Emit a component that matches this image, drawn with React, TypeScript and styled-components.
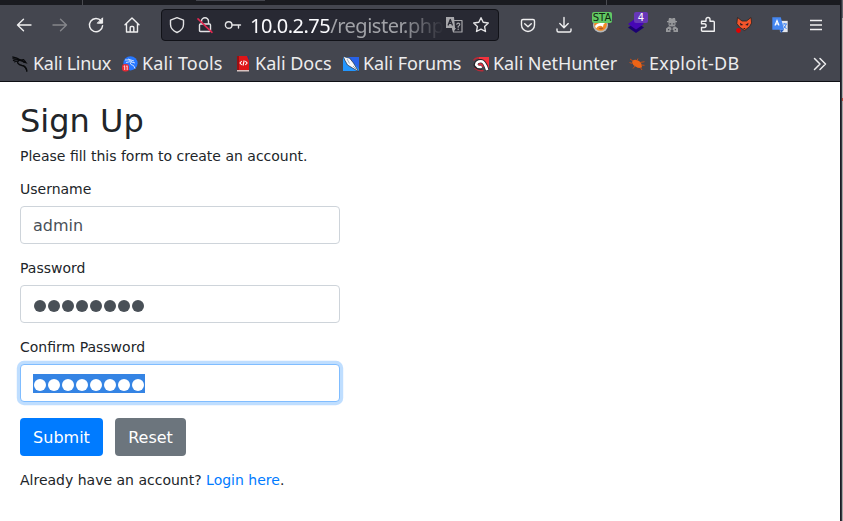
import React from "react";
import styled, { createGlobalStyle, css } from "styled-components";

const Global = createGlobalStyle`
  *, *::before, *::after { box-sizing: border-box; }
  html, body { margin: 0; padding: 0; background: #fff; overflow: hidden; }
`;

const Screen = styled.div`
  display: flex;
  width: 843px;
  height: 521px;
`;

const Browser = styled.div`
  display: flex;
  flex-direction: column;
  width: 840px;
  background: #fff;

  > * { flex-shrink: 0; }
`;

const Desktop = styled.div`
  width: 3px;
  background: linear-gradient(90deg, #1b1c24 0 1px, #343740 1px 2px, transparent 2px),
    linear-gradient(#65666d 0 18px, #aaa 18px 98px, #b84a3c 98px 101px, #a4a4a4 101px);
`;

const TabStrip = styled.div`
  display: flex;
  height: 5px;
  background: #1a1b20;
`;

const TabGap = styled.div<{ $w: number }>`
  width: ${(p) => p.$w}px;
  border-right: 1px solid #4a4b51;
`;

const ActiveTab = styled.div`
  width: 69px;
  height: 1px;
  margin-left: 113px;
  background: #44464e;
`;

const Toolbar = styled.div`
  display: flex;
  align-items: center;
  height: 44px;
  padding: 0 6px 4px;
  background: #44464f;
`;

const ToolButton = styled.div<{ $dim?: boolean }>`
  display: flex;
  flex: 0 0 36px;
  justify-content: center;
  align-items: center;
  height: 36px;
  color: ${(p) => (p.$dim ? "#85868b" : "#efeff0")};
`;

const AddressBar = styled.div`
  display: flex;
  align-items: center;
  flex: 0 0 338px;
  min-width: 0;
  height: 32px;
  margin: 0 11px;
  padding: 0 0 0 6px;
  border: 1px solid #111218;
  border-radius: 4px;
  background: #282933;
  color: #e3e3e5;
`;

const AddressSlot = styled.div<{ $w?: number }>`
  display: flex;
  flex: 0 0 ${(p) => p.$w ?? 28}px;
  justify-content: center;
`;

const Url = styled.div`
  flex: 1;
  min-width: 0;
  padding-top: 2px;
  overflow: hidden;
  white-space: nowrap;
  font: 20px/28px "Noto Sans", sans-serif;
  color: #a1a2a7;
  letter-spacing: -0.48px;
  mask-image: linear-gradient(90deg, #000 78%, transparent 100%);
`;

const Host = styled.span`
  color: #fbfbfe;
  letter-spacing: -0.5px;
`;

const Bookmarks = styled.div`
  display: flex;
  align-items: center;
  height: 33px;
  padding: 0 12px 3px;
  background: #44464f;
  border-bottom: 1px solid #0e0f14;
  color: #ececed;
`;

const Bookmark = styled.div<{ $w: number; $track?: number }>`
  display: flex;
  flex: 0 0 ${(p) => p.$w}px;
  align-items: center;
  gap: 4px;
  white-space: nowrap;
  font: 18px/26px "Noto Sans", sans-serif;
  letter-spacing: ${(p) => p.$track ?? 0}px;

  svg { flex: none; }
`;

const BookmarkName = styled.span`
  padding-bottom: 1px;
  line-height: 25px;
`;

const Overflow = styled.div`
  display: flex;
  margin-left: auto;
`;

const Page = styled.main`
  width: 360px;
  padding: 20px 20px 0;
  font-family: "DejaVu Sans", sans-serif;
  font-size: 14px;
  line-height: 17px;
  color: #212529;
`;

const Title = styled.h2`
  margin: 0 0 8px;
  font-size: 32px;
  font-weight: 400;
  line-height: 38px;
`;

const Paragraph = styled.p`
  margin: 0 0 16px;
`;

const Field = styled.div`
  margin-bottom: 16px;
`;

const Label = styled.label`
  display: block;
  margin-bottom: 8px;
`;

const Control = styled.div<{ $focus?: boolean }>`
  display: flex;
  align-items: center;
  height: 38px;
  padding: 1px 12px 0;
  border: 1px solid #ced4da;
  border-radius: 4px;
  background: #fff;
  font-size: 16px;
  line-height: 24px;
  color: #495057;
  ${(p) =>
    p.$focus &&
    css`
      border-color: #80bdff;
      box-shadow: 0 0 0 3.2px rgba(0, 123, 255, 0.25);
    `}
`;

const Mask = styled.div<{ $selected?: boolean }>`
  display: flex;
  align-items: center;
  gap: 1.6px;
  height: 19px;
  padding: 3px 0.8px 0;
  background: ${(p) => (p.$selected ? "#3584e4" : "transparent")};
  color: ${(p) => (p.$selected ? "#fff" : "#495057")};
`;

const Dot = styled.i`
  width: 12.4px;
  height: 12.4px;
  border-radius: 50%;
  background: currentColor;
`;

const Actions = styled.div`
  display: flex;
  gap: 12px;
  margin-bottom: 16px;
`;

const Button = styled.button<{ $bg: string; $w: number }>`
  width: ${(p) => p.$w}px;
  height: 38px;
  padding: 1px 0 0;
  border: 0;
  border-radius: 4px;
  background: ${(p) => p.$bg};
  color: #fff;
  font: 16px/24px "DejaVu Sans", sans-serif;
`;

const Link = styled.a`
  color: #007bff;
  text-decoration: none;
`;

const Icon = ({ size = 18, sw = 1.4, children }: { size?: number; sw?: number; children: React.ReactNode }) => (
  <svg width={size} height={size} viewBox={`0 0 ${size} ${size}`} fill="none" stroke="currentColor" strokeWidth={sw} strokeLinecap="round" strokeLinejoin="round">
    {children}
  </svg>
);

const Badged = styled.div`
  position: relative;
  display: flex;
`;

const Badge = styled.span<{ $bg: string; $fg: string; $w: number; $left: number }>`
  position: absolute;
  top: -4px;
  left: ${(p) => p.$left}px;
  width: ${(p) => p.$w}px;
  height: 11px;
  border-radius: 2px;
  background: ${(p) => p.$bg};
  color: ${(p) => p.$fg};
  font: 10px/11px "DejaVu Sans", sans-serif;
  text-align: center;
`;

const Back = () => <Icon><path d="M16 9H2.5M8.5 3.2L2.5 9l6 5.8" /></Icon>;
const Forward = () => <Icon><path d="M2 9h13.5M9.5 3.2l6 5.8-6 5.8" /></Icon>;
const Reload = () => <Icon><path d="M14.2 5A6.6 6.6 0 1 0 15.6 9.6" /><path d="M15.6 2.2v5h-5z" fill="currentColor" strokeWidth="1" /></Icon>;
const Home = () => <Icon><path d="M2 8.7L9 2l7 6.700M3.500 7.600V16h11V7.600M7.200 16v-4.500q0-1 1-1h1.600q1 0 1 1V16" /></Icon>;
const Shield = () => <Icon><path d="M9 1.700l6.500 2.500v4.300c0 3.700-2.800 6.400-6.500 8-3.700-1.600-6.500-4.300-6.500-8V4.200z" /></Icon>;
const Lock = () => (
  <Icon><path d="M5.500 7.500V5.300a3.500 3.500 0 0 1 7 0v2.200M4.500 8h9q1 0 1 1v5.500q0 1-1 1h-9q-1 0-1-1V9q0-1 1-1z" /><path d="M2 2.800l14 13.500" stroke="#e22850" strokeWidth="1.600" /></Icon>
);
const Key = () => <Icon><circle cx="4.700" cy="9" r="3.300" /><path d="M8 9h8.500M14.500 9v3" /></Icon>;
const Translate = () => (
  <Icon>
    <path d="M1 1h8l1 11H1z" fill="#a7a7ab" stroke="none" />
    <path d="M9.500 4.500H17V16H8.500L7.500 12" stroke="#a7a7ab" strokeWidth="1.200" />
    <path d="M7 12h4l-2.500 4z" fill="#a7a7ab" stroke="none" />
    <path d="M3.200 9L5.300 3.500 7.300 9M4 7.300h2.700" stroke="#282933" strokeWidth="1.300" />
    <path d="M11.800 8.200q1.500-2 3 0 0 1.500-1.600 2v1M13.200 13v.4" stroke="#a7a7ab" strokeWidth="1.200" />
  </Icon>
);
const Star = () => <Icon><path d="M9 1.700l2.200 4.600 5.100.7-3.700 3.500.9 5-4.500-2.400-4.500 2.400.9-5L1.700 7l5.100-.7z" /></Icon>;
const Pocket = () => <Icon><path d="M4 3.500h10q1.500 0 1.500 1.500V9a6.500 6.500 0 0 1-13 0V5q0-1.500 1.500-1.500zM5.700 7.700L9 10.800l3.300-3.100" /></Icon>;
const Download = () => <Icon><path d="M9 1.500v10M4.800 7.600L9 11.800l4.200-4.200M2 13v1.500q0 1.500 1.500 1.500h11q1.500 0 1.500-1.500V13" /></Icon>;
const Proxy = () => (
  <Badged>
    <svg width="18" height="18" viewBox="0 0 18 18">
      <circle cx="9.500" cy="9" r="7.600" fill="#b3b7ba" />
      <circle cx="9.500" cy="8.500" r="6.300" fill="#f28a24" />
      <path d="M4 10q3-4 10-3-2 1-2 4-4-3-7 1.500z" fill="#fff" />
      <path d="M7.500 12.500q3-2 5 0-2.500 2-5 0z" fill="#b95b22" />
    </svg>
    <Badge $bg="#62c864" $fg="#10240f" $w={20} $left={1}>STA</Badge>
  </Badged>
);
const Layers = () => (
  <Badged>
    <svg width="18" height="18" viewBox="0 0 18 18">
      <path d="M1 11.500L9 6l8 5.500L9 17z" fill="#1b0072" />
      <path d="M1 8L9 2l8 6-8 5.500z" fill="#4606b5" />
    </svg>
    <Badge $bg="#6737b8" $fg="#fff" $w={14} $left={7}>4</Badge>
  </Badged>
);
const Spy = () => (
  <svg width="14" height="16" viewBox="0 0 14 16" fill="#97989b">
    <path d="M4 1h2l1 .7L8 1h2l.6 3H12v1.200H2V4h1.400zM3.500 5h7v3Q10 9.500 7 9.500T3.500 8zM1 15v-3.500L4 9.200l3 2 3-2 3 2.300V15H8.500v-2h-3v2z" />
    <path d="M4.500 6.300h1.700v1.200H4.500zm3.300 0h1.700v1.200H7.800zM6.400 11h1.200v3H6.400zM3 12h1.200v1.200H3zm6.800 0H11v1.200H9.800z" fill="#44464f" />
  </svg>
);
const Puzzle = () => (
  <Icon><path d="M2.500 5.300H7V3.500a2 2 0 0 1 4 0v1.800h3.300q1 0 1 1v9H3.500q-1 0-1-1v-2.800h2.700a1.900 1.900 0 0 0 0-3.800H2.500z" /></Icon>
);
const Fox = () => (
  <svg width="18" height="18" viewBox="0 0 18 18">
    <path d="M2.500 1.500L7 5h4.500L16 1.500l.6 5.500-2 3.500-5 4L4.500 11 1.800 7.500z" fill="#f4552b" stroke="#292320" strokeWidth=".8" />
    <path d="M5 6.800l3.300 2.200-2.800.6zM13.500 6.800L10.200 9l2.800.6zM8.200 12h2.400l-1.200 1.500z" fill="#261b22" />
    <circle cx="3.500" cy="14.500" r="2.400" fill="#e30000" />
  </svg>
);
const GTranslate = () => (
  <svg width="18" height="18" viewBox="0 0 18 18">
    <path d="M7 4.500h10v12H9z" fill="#e4e7ed" stroke="#30343c" strokeWidth=".6" />
    <path d="M1.300 1.300h8.500L13 13.700H1.300z" fill="#4587f1" />
    <path d="M9 13.700h4L10 17z" fill="#2457b6" />
    <path d="M4 9.500l2-5 2 5M4.700 8h2.700" fill="none" stroke="#fff" strokeWidth="1.200" />
    <path d="M11.500 8h4.500M13.700 7v1M15.200 8q-.7 3-2.700 4.500M12.500 9.500l3 3.500" fill="none" stroke="#4587f1" />
  </svg>
);
const Menu = () => <Icon><path d="M3 4.500h12M3 9h12M3 13.500h12" strokeLinecap="butt" /></Icon>;

const KaliDragon = () => (
  <svg width="17" height="16" viewBox="0 0 17 16" fill="none" stroke="#08090b">
    <path d="M.3.800q5 1 8 3.200Q5 5 5.800 7.200 7 9 10 9.500q4 .5 5 5.500M1 4.700q4-2 7.500-.2 3 0 5 2L11 5.800" strokeWidth="1.300" />
    <path d="M.5 2.600l6 .8M2 6l4-1M8 4l4-.5 2 3-3-1zM12 10l2 3 1 3" strokeWidth="1" />
  </svg>
);
const Tools = () => (
  <svg width="16" height="16" viewBox="0 0 16 16">
    <circle cx="8.500" cy="7.300" r="7.100" fill="#2777ff" />
    <path d="M3 4q4-1 7 1.500Q7 7 9 8.500q3 0 4 4M4 6.500q4-2 9 .5M6 3l6 2" fill="none" stroke="#c9defe" strokeWidth="1" />
    <rect y="8" width="7" height="7.500" rx="3" fill="#e52a35" />
    <path d="M1.700 10.300l1-.5V14M4.200 10.300l1-.5V14" fill="none" stroke="#fff" strokeWidth=".8" />
  </svg>
);
const Docs = () => (
  <svg width="15" height="16" viewBox="0 0 15 16">
    <path d="M1 0h12v15H1z" fill="#de1517" /><path d="M1 0h2v14H1z" fill="#981013" />
    <path d="M11 0h2v5z" fill="#323a72" /><path d="M1 14h12v1.500H1z" fill="#d8c2c0" />
    <path d="M5.800 5L4 7l1.800 2M9.300 5l1.800 2-1.800 2M8.200 4.500L7 9.500" fill="none" stroke="#fff" strokeWidth="1.100" />
  </svg>
);
const Forums = () => (
  <svg width="16" height="16" viewBox="0 0 16 16">
    <path d="M0 1h16v14H0z" fill="#2296ff" /><path d="M5 1h11v12z" fill="#2862e8" />
    <path d="M0 0l3.500 1.500L6.500 2l4 5 5 8.500L9.500 12 4.500 9 2 4.500z" fill="#f6f8fb" stroke="#23283b" strokeWidth=".7" />
    <path d="M4 3l2.500 4.500M10 10l3 3" fill="none" stroke="#6c7486" strokeWidth=".6" />
  </svg>
);
const NetHunter = () => (
  <svg width="16" height="16" viewBox="0 0 16 16">
    <path d="M4 1h12v12z" fill="#f3323d" />
    <path d="M.5 4.500q1.500-2.500 5.500-2.700M1.500 12q4 3.500 9 2.500" fill="none" stroke="#b82a36" strokeWidth="1.400" />
    <path d="M14.300 14.500Q12 5.200 8 5 3.500 5 2.500 9q2 3.500 6 2.500" fill="none" stroke="#24242a" strokeWidth="4" />
    <path d="M14.200 14.200Q11.500 5.300 8 5.300 3.700 5.300 3.200 8.800q1.800 3 5.500 2" fill="none" stroke="#fff" strokeWidth="2.600" />
    <path d="M5.500 8.700q3-2 4.500 2" fill="none" stroke="#e02c3c" strokeWidth="1.700" />
  </svg>
);
const Bug = () => (
  <svg width="16" height="16" viewBox="0 0 16 16">
    <path d="M3 6q1-2.500 3.500-2.200 4 .5 6 4.200 1 3-.5 4-3 .3-5.500-1.500Q3.500 9 3 6z" fill="#ee6416" />
    <path d="M4 5L1 3M3.500 7.500L.5 6.500M6 10l-2 2.500M8 4.500l1-2M11 6.500l4.500-.8M12.500 9l3 .3M11 11l2 3" fill="none" stroke="#ce5014" strokeWidth=".9" />
  </svg>
);

const PasswordMask = ({ selected = false }: { selected?: boolean }) => (
  <Mask $selected={selected}>
    {Array.from({ length: 8 }, (_, i) => <Dot key={i} />)}
  </Mask>
);

export default function App() {
  return (
    <>
      <Global />
      <Screen>
        <Browser>
          <TabStrip>
            <TabGap $w={83} />
            <ActiveTab />
            <TabGap $w={342} />
          </TabStrip>
          <Toolbar>
            <ToolButton><Back /></ToolButton>
            <ToolButton $dim><Forward /></ToolButton>
            <ToolButton><Reload /></ToolButton>
            <ToolButton><Home /></ToolButton>
            <AddressBar>
              <AddressSlot $w={18}><Shield /></AddressSlot>
              <AddressSlot $w={38}><Lock /></AddressSlot>
              <AddressSlot $w={18}><Key /></AddressSlot>
              <AddressSlot $w={8} />
              <Url><Host>10.0.2.75</Host>/register.php</Url>
              <AddressSlot $w={20}><Translate /></AddressSlot>
              <AddressSlot $w={34}><Star /></AddressSlot>
            </AddressBar>
            <ToolButton><Pocket /></ToolButton>
            <ToolButton><Download /></ToolButton>
            <ToolButton><Proxy /></ToolButton>
            <ToolButton><Layers /></ToolButton>
            <ToolButton><Spy /></ToolButton>
            <ToolButton><Puzzle /></ToolButton>
            <ToolButton><Fox /></ToolButton>
            <ToolButton><GTranslate /></ToolButton>
            <ToolButton><Menu /></ToolButton>
          </Toolbar>
          <Bookmarks>
            <Bookmark $w={110} $track={-0.3}><KaliDragon /><BookmarkName>Kali Linux</BookmarkName></Bookmark>
            <Bookmark $w={114} $track={0.15}><Tools /><BookmarkName>Kali Tools</BookmarkName></Bookmark>
            <Bookmark $w={107}><Docs /><BookmarkName>Kali Docs</BookmarkName></Bookmark>
            <Bookmark $w={130} $track={-0.1}><Forums /><BookmarkName>Kali Forums</BookmarkName></Bookmark>
            <Bookmark $w={156} $track={-0.08}><NetHunter /><BookmarkName>Kali NetHunter</BookmarkName></Bookmark>
            <Bookmark $w={120} $track={0.25}><Bug /><BookmarkName>Exploit-DB</BookmarkName></Bookmark>
            <Overflow><Icon size={16} sw={1.5}><path d="M2.500 2.500L8 8l-5.500 5.500M8 2.500L13.500 8 8 13.500" /></Icon></Overflow>
          </Bookmarks>
          <Page>
            <Title>Sign Up</Title>
            <Paragraph>Please fill this form to create an account.</Paragraph>
            <Field>
              <Label>Username</Label>
              <Control>admin</Control>
            </Field>
            <Field>
              <Label>Password</Label>
              <Control><PasswordMask /></Control>
            </Field>
            <Field>
              <Label>Confirm Password</Label>
              <Control $focus><PasswordMask selected /></Control>
            </Field>
            <Actions>
              <Button $bg="#007bff" $w={83}>Submit</Button>
              <Button $bg="#6c757d" $w={71}>Reset</Button>
            </Actions>
            <Paragraph>Already have an account? <Link>Login here</Link>.</Paragraph>
          </Page>
        </Browser>
        <Desktop />
      </Screen>
    </>
  );
}
